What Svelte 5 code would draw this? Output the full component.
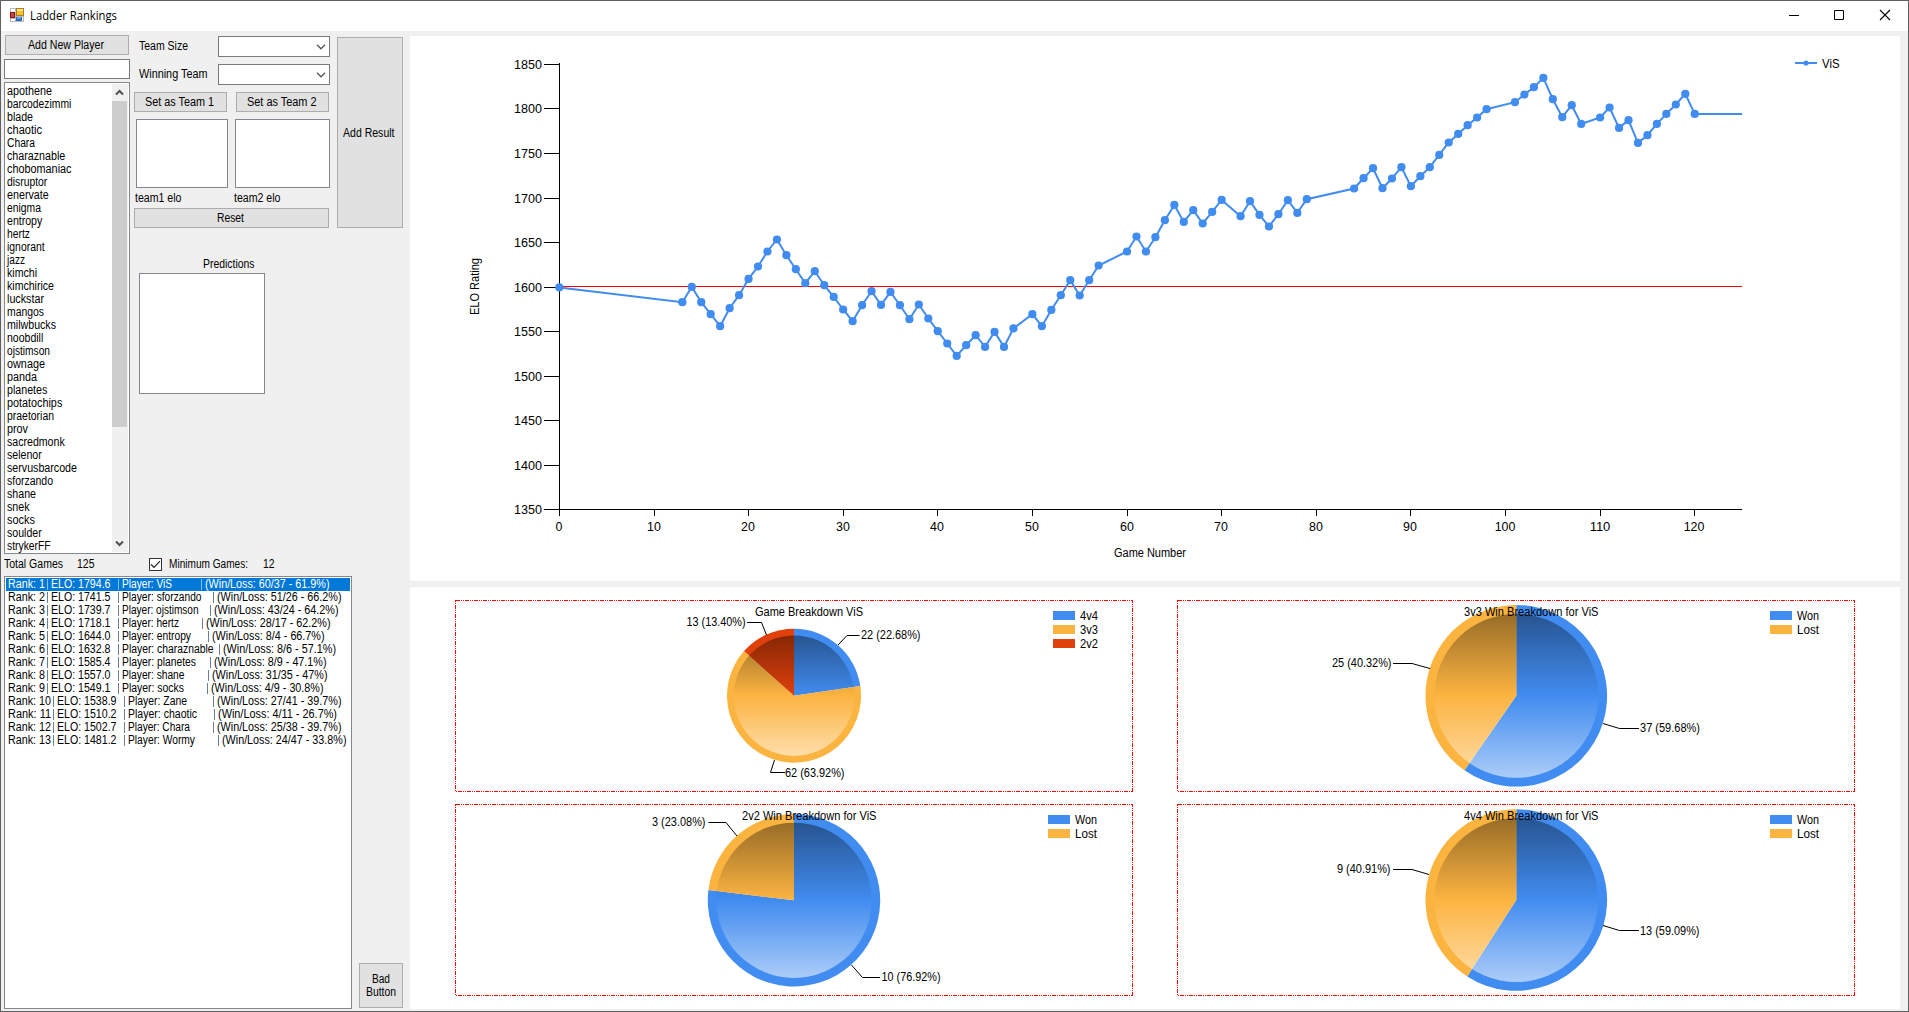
<script>
  // Scales a run of text horizontally so that it takes exactly `width` pixels.
  function fit(node, width) {
    const inner = node.firstElementChild;
    const natural = inner.getBoundingClientRect().width;
    node.style.width = width + 'px';
    if (natural > 0) inner.style.transform = `scaleX(${width / natural})`;
  }

  // [name, text width]
  const players = [
    ['apothene', 45], ['barcodezimmi', 64.3], ['blade', 26], ['chaotic', 35], ['Chara', 28],
    ['charaznable', 58.3], ['chobomaniac', 64.5], ['disruptor', 40.3], ['enervate', 41.7],
    ['enigma', 34], ['entropy', 35.3], ['hertz', 23], ['ignorant', 37.7], ['jazz', 18],
    ['kimchi', 30], ['kimchirice', 47], ['luckstar', 37], ['mangos', 37], ['milwbucks', 49],
    ['noobdill', 36.3], ['ojstimson', 43], ['ownage', 38], ['panda', 30], ['planetes', 40.3],
    ['potatochips', 55.3], ['praetorian', 47], ['prov', 21], ['sacredmonk', 57.7],
    ['selenor', 34.7], ['servusbarcode', 70], ['sforzando', 46], ['shane', 29], ['snek', 22.7],
    ['socks', 28], ['soulder', 34.7], ['strykerFF', 43.7]
  ];

  // [rank, elo, player, player text end, record column, record, record end]
  const ranks = [
    [1, '1794.6', 'ViS', 172.5, 201, '60/37 - 61.9%', 330],
    [2, '1741.5', 'sforzando', 202, 213, '51/26 - 66.2%', 342],
    [3, '1739.7', 'ojstimson', 199, 210, '43/24 - 64.2%', 339],
    [4, '1718.1', 'hertz', 179.5, 202, '28/17 - 62.2%', 331],
    [5, '1644.0', 'entropy', 191.5, 208, '8/4 - 66.7%', 325],
    [6, '1632.8', 'charaznable', 214, 218.5, '8/6 - 57.1%', 336],
    [7, '1585.4', 'planetes', 196.5, 210, '8/9 - 47.1%', 327],
    [8, '1557.0', 'shane', 185, 208, '31/35 - 47%', 328],
    [9, '1549.1', 'socks', 184.5, 207, '4/9 - 30.8%', 324],
    [10, '1538.9', 'Zane', 187.5, 213, '27/41 - 39.7%', 342],
    [11, '1510.2', 'chaotic', 197.5, 213.5, '4/11 - 26.7%', 337],
    [12, '1502.7', 'Chara', 190.5, 213, '25/38 - 39.7%', 342],
    [13, '1481.2', 'Wormy', 195.5, 218, '24/47 - 33.8%', 347]
  ];

  const X0 = 559.3, STEP = 9.462;
  // [game number, vertical position in the chart]
  const a = [
    [0, 287.2], [13, 302], [14, 286.7], [15, 302], [16, 314], [17, 326], [18, 308], [19, 295],
    [20, 278.7], [21, 266.3], [22, 251.3], [23, 239.3], [24, 255], [25, 269], [26, 283],
    [27, 271], [28, 285], [29, 296.7], [30, 309.3], [31, 321], [32, 305], [33, 291],
    [34, 304.7], [35, 291.7], [36, 305], [37, 319], [38, 304.3], [39, 318.3], [40, 331],
    [41, 343.3], [42, 355.7], [43, 345], [44, 335], [45, 346.7], [46, 331.7], [47, 346.7],
    [48, 328.2], [50, 314], [51, 326], [52, 309.7], [53, 295], [54, 280], [55, 295.3],
    [56, 280], [57, 265.3], [60, 251.3], [61, 236.3], [62, 251.3], [63, 237], [64, 220],
    [65, 204.7], [66, 221.7], [67, 210], [68, 223.3], [69, 211.7], [70, 199.7], [72, 216],
    [73, 201], [74, 214.7], [75, 226.3], [76, 214], [77, 200], [78, 212.7], [79, 199],
    [84, 188.3], [85, 178], [86, 168], [87, 188], [88, 178.3], [89, 167], [90, 186],
    [91, 176], [92, 167], [93, 154.7], [94, 142.3], [95, 133.7], [96, 125], [97, 117.3],
    [98, 109], [101, 102], [102, 94.3], [103, 87], [104, 77.7], [105, 99], [106, 117],
    [107, 105], [108, 123.7], [110, 117.3], [111, 107.3], [112, 127.7], [113, 120],
    [114, 142.7], [115, 135], [116, 123.7], [117, 113.7], [118, 104.3], [119, 93.7], [120, 113.7]
  ];
  const dots = a.map(([g, y]) => [X0 + g * STEP, y + 0.2]);
  const line = [...dots, [X0 + 125 * STEP, 113.9]].map((p) => p.join(',')).join(' ');
  const yTicks = [1850, 1800, 1750, 1700, 1650, 1600, 1550, 1500, 1450, 1400, 1350].map((v, i) => [v, Math.round(63.9 + i * 44.55) + 0.5]);
  const xTicks = Array.from({ length: 13 }, (_, i) => [i * 10, Math.round(X0 - 0.4 + i * 10 * STEP) + 0.5]);

  const BLUE = '#418cf0', AMBER = '#fcb441', RED = '#e0400a';

  function slices(cx, cy, r, parts) {
    const total = parts.reduce((s, p) => s + p[0], 0);
    let from = 0;
    return parts.map(([n, fill]) => {
      const to = from + (n / total) * Math.PI * 2;
      const p = (t) => `${cx + r * Math.sin(t)} ${cy - r * Math.cos(t)}`;
      const d = `M${cx} ${cy}L${p(from)}A${r} ${r} 0 ${to - from > Math.PI ? 1 : 0} 1 ${p(to)}Z`;
      from = to;
      return { d, fill };
    });
  }

  const pies = [
    {
      box: [455.5, 600.5, 677, 191], cx: 794, cy: 695.7, r: 67, ri: 60.2,
      title: ['Game Breakdown ViS', 755, 616, 108],
      parts: [[22, BLUE], [62, AMBER], [13, RED]],
      leads: ['838,645 847,635.5 859.5,635.5', '774.5,760 770.5,772.5 785,772.5', '766.5,635 761.5,622.5 747,622.5'],
      labels: [['22 (22.68%)', 861, 639, 59.5], ['62 (63.92%)', 785, 777, 59.5], ['13 (13.40%)', 686.5, 626, 59]],
      legend: [['4v4', BLUE], ['3v3', AMBER], ['2v2', RED]], lx: 1053, ly: 611, lw: 18
    },
    {
      box: [1177.5, 600.5, 677, 191], cx: 1516.3, cy: 695.8, r: 90.8, ri: 82,
      title: ['3v3 Win Breakdown for ViS', 1464, 616, 134.5],
      parts: [[37, BLUE], [25, AMBER]],
      leads: ['1603,723.5 1619.5,728.5 1639,728.5', '1430,668.5 1412,663.5 1393,663.5'],
      labels: [['37 (59.68%)', 1640, 732, 60], ['25 (40.32%)', 1332, 667, 59.5]],
      legend: [['Won', BLUE], ['Lost', AMBER]], lx: 1770, ly: 611, lw: 22
    },
    {
      box: [455.5, 804.5, 677, 191], cx: 794, cy: 900.3, r: 86.2, ri: 77.6,
      title: ['2v2 Win Breakdown for ViS', 742, 820, 134.5],
      parts: [[10, BLUE], [3, AMBER]],
      leads: ['851.5,965 862.5,977.5 880,977.5', '737,836 726,822.5 708.5,822.5'],
      labels: [['10 (76.92%)', 881.5, 981, 59], ['3 (23.08%)', 652, 826, 53.5]],
      legend: [['Won', BLUE], ['Lost', AMBER]], lx: 1048, ly: 815, lw: 22
    },
    {
      box: [1177.5, 804.5, 677, 191], cx: 1516.3, cy: 900, r: 90.8, ri: 82,
      title: ['4v4 Win Breakdown for ViS', 1464, 820, 134.5],
      parts: [[13, BLUE], [9, AMBER]],
      leads: ['1603,925.5 1619.5,930.5 1639,930.5', '1429,874.5 1412,869.5 1393,869.5'],
      labels: [['13 (59.09%)', 1640, 935, 59.5], ['9 (40.91%)', 1337, 873, 53.5]],
      legend: [['Won', BLUE], ['Lost', AMBER]], lx: 1770, ly: 815, lw: 22
    }
  ];
</script>

{#snippet t(text, width)}<span class="fit" use:fit={width}><span>{text}</span></span>{/snippet}

{#snippet combo()}
  <div class="combo">
    <svg width="10" height="6" viewBox="0 0 10 6"><path d="M1 .8 5 4.8 9 .8" fill="none" stroke="#555" stroke-width="1.3" /></svg>
  </div>
{/snippet}

<div class="window">
  <header>
    <svg class="logo" width="14" height="14" viewBox="0 0 14 14">
      <rect width="14" height="14" fill="#b9b9b9" />
      <path d="M1 1h4v3H1zM1 11h4v2H1zM12 9h1v4h-1z" fill="#fff" />
      <rect x="6" y="0" width="8" height="8" fill="#a8801c" />
      <rect x="7" y="1" width="6" height="6" fill="#f6c12c" />
      <path d="M7 1h6v2H7z" fill="#fde28a" />
      <rect x="0" y="4" width="5" height="6" fill="#8d1712" />
      <rect x="1" y="5" width="3" height="4" fill="#c8453c" />
      <rect x="6" y="9" width="6" height="4" fill="#2e66c4" />
      <path d="M7 9h4v2H7z" fill="#69a0ee" />
    </svg>
    <span class="caption">{@render t('Ladder Rankings', 87)}</span>
    <svg class="controls" width="102" height="12" viewBox="0 0 102 12">
      <g fill="none" stroke="#000">
        <path d="M0 6.5h10M45.500 1.500h9v9h-9z" />
        <path d="M91 1 101 11M101 1 91 11" stroke-width="1.1" />
      </g>
    </svg>
  </header>

  <div class="body">
    <aside>
      <div class="top">
        <div class="col-a">
          <button class="add">{@render t('Add New Player', 76)}</button>
          <div class="input"></div>
          <div class="list players">
            <ul>
              {#each players as [name, w]}<li>{@render t(name, w)}</li>{/each}
            </ul>
            <div class="scroll">
              <svg width="15" height="17" viewBox="0 0 15 17"><path d="M4 10.500 7.500 7 11 10.500" fill="none" stroke="#505050" stroke-width="2" /></svg>
              <div class="thumb"></div>
              <svg class="down" width="15" height="17" viewBox="0 0 15 17"><path d="M4 6.500 7.500 10 11 6.500" fill="none" stroke="#505050" stroke-width="2" /></svg>
            </div>
          </div>
        </div>

        <div class="col-b">
          <div class="field">{@render t('Team Size', 49)}{@render combo()}</div>
          <div class="field">{@render t('Winning Team', 68.5)}{@render combo()}</div>
          <div class="pair">
            <button>{@render t('Set as Team 1', 69)}</button>
            <button>{@render t('Set as Team 2', 69.5)}</button>
          </div>
          <div class="boxes"><div class="list"></div><div class="list"></div></div>
          <div class="elos">{@render t('team1 elo', 46.5)}{@render t('team2 elo', 46.5)}</div>
          <button class="reset">{@render t('Reset', 27)}</button>
          <div class="pred-title">{@render t('Predictions', 51.5)}</div>
          <div class="list pred"></div>
        </div>

        <button class="result">{@render t('Add Result', 51.5)}</button>
      </div>

      <div class="totals">
        {@render t('Total Games', 59)}
        <span class="total">{@render t('125', 17.5)}</span>
        <span class="check"><svg width="11" height="11" viewBox="0 0 11 11"><path d="M1 5.500 4 8.500 10 2.200" fill="none" stroke="#222" stroke-width="1.2" /></svg></span>
        {@render t('Minimum Games:', 79)}
        <span class="min">{@render t('12', 11.5)}</span>
      </div>

      <div class="bottom">
        <div class="list ranks">
          {#each ranks as [n, elo, who, end, col, rec, recEnd], i}
            {@const shift = n > 9 ? 6 : 0}
            <div class="rank" class:selected={i === 0}>
              <span class="cell" style:width="{38 + shift}px">{@render t('Rank: ' + n, 37 + shift)}</span>
              <span class="cell" style:width="70.500px"><i></i>{@render t('ELO: ' + elo, 59.5)}</span>
              <span class="cell" style:width="{col - 117.5 - shift}px"><i></i>{@render t('Player: ' + who, end - 122.5 - shift)}</span>
              <span class="cell"><i></i>{@render t('(Win/Loss: ' + rec + ')', recEnd - col - 4.5)}</span>
            </div>
          {/each}
        </div>
        <button class="bad">{@render t('Bad', 18)}{@render t('Button', 30)}</button>
      </div>
    </aside>

    <main>
      <section>
        <svg width="1490" height="545" viewBox="410 36 1490 545">
          <line x1="559" x2="1742" y1="286.5" y2="286.5" stroke="#f00" shape-rendering="crispEdges" />
          <g stroke="#000" shape-rendering="crispEdges">
            <path d="M559.500 63V510M559 509.500H1742" fill="none" />
            {#each yTicks as [, y]}<line x1="544" x2="559" y1={y} y2={y} />{/each}
            {#each xTicks as [, x]}<line x1={x} x2={x} y1="509" y2="516" />{/each}
          </g>
          <g class="axis">
            {#each yTicks as [v, y]}<text x="514" y={y + 4} textLength="28" lengthAdjust="spacingAndGlyphs">{v}</text>{/each}
            {#each xTicks as [v, x]}
              {@const w = String(v).length * 6.9}
              <text x={x - 0.5 - w / 2} y="531" textLength={w} lengthAdjust="spacingAndGlyphs">{v}</text>
            {/each}
          </g>
          <polyline points={line} fill="none" stroke={BLUE} stroke-width="2" />
          {#each dots as [x, y]}<circle cx={x} cy={y} r="4.1" fill={BLUE} />{/each}
          <text x="1114" y="557" textLength="72" lengthAdjust="spacingAndGlyphs">Game Number</text>
          <text x="-315" y="479" transform="rotate(-90)" textLength="57" lengthAdjust="spacingAndGlyphs">ELO Rating</text>
          <path d="M1795 63h22" stroke={BLUE} stroke-width="2" />
          <circle cx="1806" cy="63" r="2.600" fill={BLUE} />
          <text x="1822" y="68" textLength="17.500" lengthAdjust="spacingAndGlyphs">ViS</text>
        </svg>
      </section>

      <section>
        <svg width="1490" height="422" viewBox="410 587 1490 422">
          <defs>
            <linearGradient id="shine" x1="0" y1="0" x2="0" y2="1">
              <stop offset="0" stop-color="#000" stop-opacity=".4" />
              <stop offset=".5" stop-color="#000" stop-opacity="0" />
              <stop offset=".5" stop-color="#fff" stop-opacity="0" />
              <stop offset="1" stop-color="#fff" stop-opacity=".56" />
            </linearGradient>
          </defs>
          {#each pies as p}
            <rect class="frame" x={p.box[0]} y={p.box[1]} width={p.box[2]} height={p.box[3]} />
            {#each slices(p.cx, p.cy, p.r, p.parts) as s}<path d={s.d} fill={s.fill} />{/each}
            <circle cx={p.cx} cy={p.cy} r={p.ri} fill="url(#shine)" />
            {#each p.leads as l}<polyline class="lead" points={l} />{/each}
            {#each [p.title, ...p.labels] as [s, x, y, w]}
              <text {x} {y} textLength={w} lengthAdjust="spacingAndGlyphs">{s}</text>
            {/each}
            {#each p.legend as [s, fill], i}
              <rect x={p.lx} y={p.ly + i * 14} width="22" height="9" {fill} />
              <text x={p.lx + 27} y={p.ly + 9 + i * 14} textLength={p.lw} lengthAdjust="spacingAndGlyphs">{s}</text>
            {/each}
          {/each}
        </svg>
      </section>
    </main>
  </div>
</div>

<style>
  :global(body) { margin: 0; overflow: hidden; }
  * { box-sizing: border-box; }
  .window {
    width: 1909px; height: 1012px; display: flex; flex-direction: column;
    border: 1px solid #5f5f5f; background: #f0f0f0; color: #000;
    font: 12px/13px "Liberation Sans", Arial, sans-serif;
  }
  .fit { display: inline-block; white-space: pre; flex: none; text-align: left; }
  .fit > span { display: inline-block; transform-origin: 0 50%; }

  header { height: 30px; flex: none; display: flex; align-items: center; background: #fff; padding: 0 17px 0 9px; }
  .logo { margin-top: -2px; }
  .caption { margin-left: 6px; font: 12px/16px "Open Sans", sans-serif; }
  .controls { margin-left: auto; margin-top: -2px; }

  .body { flex: 1; display: flex; min-height: 0; }
  aside { width: 409px; flex: none; display: flex; flex-direction: column; padding: 4px 7px 2px 3px; }
  .top { display: flex; flex: none; height: 519px; }
  button {
    display: flex; align-items: center; justify-content: center; padding: 0; margin: 0;
    font: inherit; color: #000; background: #e1e1e1; border: 1px solid #adadad; border-radius: 0; height: 20px;
  }
  .list { background: #fff; border: 1px solid #828790; }

  .col-a { width: 126px; display: flex; flex-direction: column; }
  .add { flex: none; width: 124px; margin-left: 1px; padding: 1px 2px 0 0; }
  .input { flex: none; height: 20px; background: #fff; border: 1px solid #7a7a7a; margin: 4px 0 3px; }
  .players { flex: none; height: 472px; display: flex; justify-content: space-between; padding: 1px; }
  ul { list-style: none; margin: 0; padding: 1px 0 0 1px; }
  li { height: 13px; display: flex; }
  .scroll { width: 16px; background: #f0f0f0; display: flex; flex-direction: column; }
  .thumb { width: 15px; height: 326px; background: #cdcdcd; }
  .down { margin-top: auto; }

  .col-b { width: 196px; margin-left: 4px; display: flex; flex-direction: column; padding-top: 1px; }
  .field { display: flex; align-items: center; justify-content: space-between; padding-left: 5px; height: 21px; margin-bottom: 7px; }
  .combo { width: 112px; height: 21px; background: #fff; border: 1px solid #7a7a7a; display: flex; align-items: center; justify-content: flex-end; padding-right: 3px; }
  .pair { display: flex; gap: 9px; }
  .pair button { width: 93px; padding-right: 2px; }
  .boxes { display: flex; justify-content: space-between; margin: 7px 0 0 2px; height: 69px; }
  .boxes .list:first-child { width: 92px; }
  .boxes .list:last-child { width: 95px; }
  .elos { display: flex; gap: 52.500px; height: 20px; align-items: center; padding-left: 1px; }
  .reset { width: 195px; padding-right: 2px; }
  .pred-title { height: 45px; padding: 30px 0 0 69px; }
  .pred { width: 126px; height: 121px; margin-left: 5px; }
  .result { width: 66px; height: 191px; margin: 2px 0 0 7px; padding: 1px 2px 0 0; }

  .totals { flex: none; height: 21px; display: flex; align-items: center; }
  .total { margin-left: 14px; }
  .check { width: 13px; height: 13px; background: #fff; border: 1px solid #333; margin: 0 7px 0 54px; display: flex; }
  .min { margin-left: 15px; }

  .bottom { flex: 1; display: flex; align-items: flex-end; justify-content: space-between; }
  .ranks { width: 348px; height: 433px; padding: 1px; }
  .rank { height: 13px; display: flex; padding-left: 2px; }
  .rank.selected { background: #0078d7; color: #fff; }
  .cell { display: flex; flex: none; }
  i { width: 1px; height: 11px; flex: none; margin: 1px 3px 0 1px; background: #6a7f99; }
  .selected i { background: #7fc0f5; }
  .bad { width: 44px; height: 45px; margin-bottom: 1px; flex-direction: column; padding-right: 1px; }

  main { flex: 1; display: flex; flex-direction: column; gap: 6px; padding-top: 5px; }
  section { background: #fff; width: 1490px; }
  section svg { display: block; font: 12px "Liberation Sans", Arial, sans-serif; }
  section .axis { font-size: 13.500px; }
  .frame { fill: none; stroke: #f00; stroke-dasharray: 4 1 1 1 1 1; shape-rendering: crispEdges; }
  .lead { fill: none; stroke: #000; }
</style>
